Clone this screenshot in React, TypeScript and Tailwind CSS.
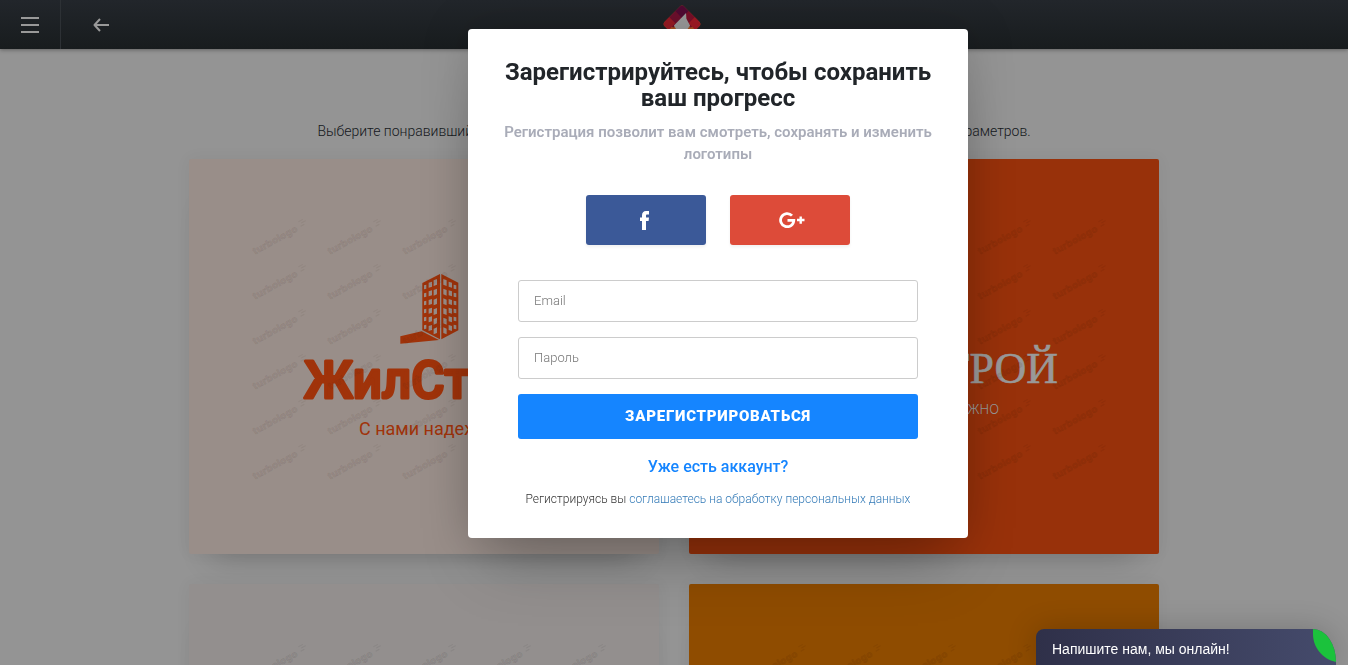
import React, { useState } from "react";

const MARK_COLS = [0, 1, 2, 3, 4];
const MARK_ROWS = [0, 1, 2, 3, 4, 5];
const WINDOW_ROWS = [0, 1, 2, 3, 4, 5];

// x, width, first row top, row step, height, slope of the wall
const WINDOW_COLS = [
  { x: 402, w: 7, y: 76, step: 24, h: 12, skew: -2 },
  { x: 416, w: 10, y: 68, step: 26, h: 15, skew: -3 },
  { x: 431, w: 10, y: 61, step: 29, h: 17, skew: -4 },
  { x: 460, w: 10, y: 57, step: 29, h: 17, skew: 4 },
  { x: 476, w: 10, y: 65, step: 26, h: 15, skew: 3 },
  { x: 491, w: 8, y: 74, step: 24, h: 12, skew: 2 },
];

const Watermarks: React.FC<{ fill: string }> = ({ fill }) => (
  <g fill={fill}>
    {MARK_ROWS.map((row) =>
      MARK_COLS.map((col) => (
        <g key={`${row}-${col}`} transform={`translate(${66 + col * 75} ${96 + row * 45}) rotate(-29)`}>
          <text fontSize="10" fontWeight="900" stroke={fill} strokeWidth="0.6" className="font-['Inter']">
            turbologo
          </text>
          <path d="M54 -8h5M56 -5.500h5M54 -3h4" stroke={fill} strokeWidth="1" fill="none" />
        </g>
      ))
    )}
  </g>
);

const Building = () => (
  <g transform="translate(101 101) scale(0.3333)">
    <path d="M397 69 450 42V238L397 210ZM454 42 505 68V211L454 238ZM331 229 395 214 447 240 331 251Z" fill="#a0330a" />
    {WINDOW_COLS.map((c) =>
      WINDOW_ROWS.map((r) => {
        const y = c.y + r * c.step;
        return (
          <path
            key={`${c.x}-${r}`}
            d={`M${c.x} ${y}L${c.x + c.w} ${y + c.skew}V${y + c.skew + c.h}L${c.x} ${y + c.h}Z`}
            fill="#998e89"
          />
        );
      })
    )}
  </g>
);

interface CardProps {
  label: string;
  className: string;
  mark: string;
  children?: React.ReactNode;
}

const LogoCard: React.FC<CardProps> = ({ label, className, mark, children }) => (
  <div
    className={`rounded-xs shadow-[0_0_16px_rgba(0,0,0,0.05),0_26px_30px_-22px_rgba(0,0,0,0.2)] ${className}`}
  >
    <svg viewBox="0 0 470 395" className="block w-full" role="img" aria-label={label}>
      {children}
      <Watermarks fill={mark} />
    </svg>
  </div>
);

const BrandLogo = () => (
  <svg viewBox="0 0 120 120" className="size-11" aria-hidden="true">
    <defs>
      <clipPath id="brand-shape">
        <rect x="22" y="22" width="76" height="76" rx="10" transform="rotate(45 60 60)" />
      </clipPath>
    </defs>
    <g clipPath="url(#brand-shape)">
      <rect width="120" height="120" fill="#a3501f" />
      <path d="M60 -8 84 22 60 46 36 22Z" fill="#500a32" />
      <path d="M36 18 60 44 36 70 10 44Z" fill="#6c0f2c" />
      <path d="M84 18 110 44 84 70 60 44Z" fill="#780f28" />
      <path d="M16 32 42 58 16 84 -10 58Z" fill="#961a24" />
      <path d="M104 32 130 58 104 84 78 58Z" fill="#a01a24" />
    </g>
    <path d="M71 30 72 46 82 64 58 98 38 64Z" fill="#999" />
  </svg>
);

const Header = () => (
  <header className="relative grid h-[49px] grid-cols-[1fr_auto_1fr] bg-linear-to-b from-[#22262b] to-[#181c1e] shadow-[0_1px_4px_rgba(0,0,0,0.35)]">
    <div className="flex">
      <button type="button" aria-label="Меню" className="flex w-15 items-center justify-center">
        <span className="flex w-[18px] flex-col gap-[5px]">
          <span className="h-0.5 bg-[#999]" />
          <span className="h-0.5 bg-[#999]" />
          <span className="h-0.5 bg-[#999]" />
        </span>
      </button>
      <button type="button" aria-label="Назад" className="flex w-20 items-center justify-center border-l border-[#2d3135]">
        <svg viewBox="0 0 16 14" className="h-3.5 w-4" fill="none" stroke="#999" strokeWidth="2" strokeLinejoin="round">
          <path d="M7 1 1.500 7 7 13M1.500 7H16" />
        </svg>
      </button>
    </div>
    <a href="#" aria-label="Turbologo" className="ml-4 pt-0.5">
      <BrandLogo />
    </a>
  </header>
);

const FacebookIcon = () => (
  <svg viewBox="0 0 9 19" className="h-[19px] w-[9px]" fill="currentColor" aria-hidden="true">
    <path d="M2 19V10H0V6.500H2V4.500C2 1.500 3.500 0 6 0H9V3.500H7.200C6.300 3.500 6 3.900 6 4.700V6.500H9L8.600 10H6V19Z" />
  </svg>
);

const GooglePlusIcon = () => (
  <svg viewBox="0 0 26 16" className="h-4 w-[26px]" aria-hidden="true">
    <path d="M13 3.600A6.600 6.600 0 1 0 14.800 8.400H8.500" fill="none" stroke="currentColor" strokeWidth="2.800" />
    <path d="M20.500 4.500h2.400v2.300H25.500v2.400H22.900v2.500h-2.400V9.200H18V6.800h2.500Z" fill="currentColor" />
  </svg>
);

const SignUpModal = () => {
  const [email, setEmail] = useState("");
  const [password, setPassword] = useState("");

  const inputClass =
    "h-[42px] w-full rounded-[3px] border border-[#ccc] bg-white px-[15px] pb-0.5 text-[13px] font-light text-[#333] outline-none placeholder:text-[#777]";

  return (
    <div className="fixed inset-0 flex items-start justify-center overflow-hidden pt-[29px] pl-22">
      <div
        role="dialog"
        aria-modal="true"
        className="w-full max-w-[500px] rounded-sm bg-white px-8 pt-[30px] pb-[29px] text-center shadow-[0_0_50px_rgba(0,0,0,0.15),0_40px_60px_-20px_rgba(0,0,0,0.25)]"
      >
        <h2 className="text-2xl leading-[26px] font-bold text-[#212529]">
          Зарегистрируйтесь, чтобы сохранить ваш прогресс
        </h2>
        <p className="mt-2.5 text-[15px] leading-[22px] font-semibold text-[#a9acb8]">
          Регистрация позволит вам смотреть, сохранять и изменить логотипы
        </p>

        <div className="mt-[30px] flex justify-center gap-6">
          <button
            type="button"
            aria-label="Facebook"
            className="flex h-[50px] w-[120px] items-center justify-center rounded-[3px] bg-[#3b5998] pr-1 text-white shadow-[0_2px_3px_rgba(0,0,0,0.06)]"
          >
            <FacebookIcon />
          </button>
          <button
            type="button"
            aria-label="Google+"
            className="flex h-[50px] w-[120px] items-center justify-center rounded-[3px] bg-[#dd4b39] pl-1 text-white shadow-[0_2px_3px_rgba(0,0,0,0.06)]"
          >
            <GooglePlusIcon />
          </button>
        </div>

        <form className="mx-auto mt-[35px] flex max-w-[400px] flex-col gap-[15px]" onSubmit={(e) => e.preventDefault()}>
          <input
            type="email"
            aria-label="Email"
            placeholder="Email"
            value={email}
            onChange={(e) => setEmail(e.target.value)}
            className={inputClass}
          />
          <input
            type="password"
            aria-label="Пароль"
            placeholder="Пароль"
            value={password}
            onChange={(e) => setPassword(e.target.value)}
            className={inputClass}
          />
          <button type="submit" className="h-[45px] rounded-[3px] bg-[#1585ff] text-[15px] font-black tracking-wider text-white uppercase">
            Зарегистрироваться
          </button>
        </form>

        <a href="#" className="mt-4 block text-base leading-6 font-medium text-[#1585ff]">
          Уже есть аккаунт?
        </a>
        <p className="mt-2.5 text-xs leading-5 font-light text-[#333]">
          Регистрируясь вы{" "}
          <a href="#" className="text-[#337ab7]">
            соглашаетесь на обработку персональных данных
          </a>
        </p>
      </div>
    </div>
  );
};

const ChatWidget = () => (
  <button
    type="button"
    className="fixed right-3 bottom-0 flex h-9 w-[300px] items-center overflow-hidden rounded-tl-lg rounded-tr-[23px_33px] bg-linear-to-r from-[#2f3049] to-[#454b6c] px-4 pt-1 text-left font-['Liberation_Sans',sans-serif] text-sm text-white shadow-[0_0_30px_rgba(0,0,0,0.2)]"
  >
    Напишите нам, мы онлайн!
    <svg viewBox="0 0 23 33" className="absolute top-0 right-0 h-[33px] w-[23px]" aria-hidden="true">
      <path d="M0 0H23V33C9 30 0 18 0 5Z" fill="#1bc23c" />
    </svg>
  </button>
);

const App: React.FC = () => {
  return (
    <div className="h-screen overflow-hidden bg-[#949494] font-['Roboto',sans-serif]">
      <Header />
      <main className="mx-auto max-w-[970px] pt-[72px]">
        <p className="text-center text-sm leading-5 font-light whitespace-nowrap text-[#15181c]">
          Выберите понравившийся логотип. Вы сможете изменить цвета, шрифты, иконку и много других параметров.
        </p>
        <div className="mt-[18px] grid grid-cols-2 gap-[30px]">
          <LogoCard label="ЖилСтрой" className="bg-[#998e89]" mark="rgba(60,45,40,0.08)">
            <Building />
            <text
              x="115"
              y="239"
              fontSize="51"
              fontWeight="500"
              fill="#a0330a"
              stroke="#a0330a"
              strokeWidth="3"
              strokeLinejoin="round"
            >
              ЖилСтрой
            </text>
            <text x="170" y="276" fontSize="18" fontWeight="400" fill="#a0330a">
              С нами надежно
            </text>
          </LogoCard>
          <LogoCard label="ДомСтрой" className="bg-[#98310a]" mark="rgba(60,20,0,0.09)">
            <text
              x="369"
              y="224"
              fontSize="44"
              textAnchor="end"
              fill="#999"
              stroke="#999"
              strokeWidth="0.6"
              className="font-['Liberation_Serif',serif]"
            >
              ДОМСТРОЙ
            </text>
            <text x="310" y="255" fontSize="13" fontWeight="300" textAnchor="end" fill="#999" className="font-['Inter']">
              С НАМИ НАДЕЖНО
            </text>
          </LogoCard>
          <LogoCard label="Логотип" className="bg-[#938f8e]" mark="rgba(40,35,35,0.08)" />
          <LogoCard label="Логотип" className="bg-[#8f4c00]" mark="rgba(60,20,0,0.09)" />
        </div>
      </main>
      <SignUpModal />
      <ChatWidget />
    </div>
  );
};

export default App;
